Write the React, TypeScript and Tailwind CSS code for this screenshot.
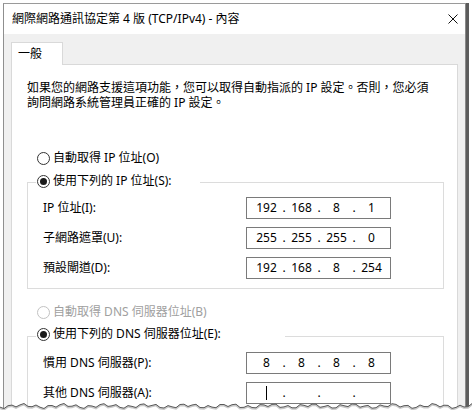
import React from 'react';

const FONT = "font-['Noto_Sans','Noto_Sans_CJK_TC',sans-serif]";

const Radio = ({ checked, disabled, label }: { checked?: boolean; disabled?: boolean; label: string }) => (
    <div className="flex h-[16px] items-center gap-[3px]">
        <span
            className={`flex h-[13px] w-[13px] items-center justify-center rounded-full border bg-white ${
                disabled ? 'border-[#c2c2c2]' : 'border-[#333333]'
            }`}
        >
            {checked && <span className="h-[7px] w-[7px] rounded-full bg-[#1a1a1a]" />}
        </span>
        <span className={`whitespace-nowrap text-[12px] leading-[16px] ${disabled ? 'text-[#a0a0a0]' : 'text-black'}`}>
            {label}
        </span>
    </div>
);

const IpField = ({ parts, caret }: { parts: string[]; caret?: boolean }) => (
    <div className="flex h-[22px] w-[145px] items-center border border-[#7a7a7a] bg-white pl-[5px] text-[12px] leading-[16px] text-black">
        {parts.map((p, i) => (
            <React.Fragment key={i}>
                {i > 0 && <span className="w-[6px] text-center">.</span>}
                <span className="relative flex h-[16px] w-[29px] items-center justify-center">
                    {caret && i === 0 ? <span className="h-[14px] w-[1px] bg-black" /> : p}
                </span>
            </React.Fragment>
        ))}
    </div>
);

const Row = ({ label, parts, caret }: { label: string; parts: string[]; caret?: boolean }) => (
    <div className="flex h-[22px] items-center">
        <span className="w-[203px] whitespace-nowrap text-[12px] leading-[16px] text-black">{label}</span>
        <IpField parts={parts} caret={caret} />
    </div>
);

const GroupBox = ({
    caption,
    captionWidth,
    captionTop,
    children,
}: {
    caption: React.ReactNode;
    captionWidth: string;
    captionTop: string;
    children: React.ReactNode;
}) => (
    <div className="relative w-[417px] border border-[#dcdcdc] pl-[15px]">
        <div className={`absolute left-[8px] bg-white pl-[1px] ${captionWidth} ${captionTop}`}>{caption}</div>
        {children}
    </div>
);

const jag = Array.from({ length: 120 }, (_, i) => {
    const x = i * 4;
    const y = 8 + 1.6 * Math.sin(i * 1.9) + 1.1 * Math.sin(i * 0.61 + 1.3);
    return `${x},${y.toFixed(1)}`;
}).join(' ');

export default function App() {
    return (
        <div className={`relative h-[410px] w-[472px] overflow-hidden bg-white ${FONT}`}>
            <div className="ml-[3px] mt-[3px] h-[440px] w-[463px] border-l border-r border-t border-l-[#8f8f8f] border-r-[#8a8a8a] border-t-[#9a9a9a] bg-[#f0f0f0] shadow-[3px_0_0_#5c5c5c]">
                {/* title bar */}
                <div className="flex h-[30px] items-center justify-between bg-white pl-[8px] pr-[7px]">
                    <span className="whitespace-nowrap text-[12px] leading-[16px] text-black">
                        網際網路通訊協定第 4 版 (TCP/IPv4) - 內容
                    </span>
                    <svg width="10" height="10" viewBox="0 0 10 10">
                        <path d="M0.5 0.5 L9.5 9.5 M9.5 0.5 L0.5 9.5" stroke="#111" strokeWidth="1" fill="none" />
                    </svg>
                </div>

                {/* body */}
                <div className="px-[7px] pt-[8px]">
                    <div className="relative z-10 -mb-px flex h-[23px] w-[52px] items-center border-l border-r border-t border-[#d9d9d9] bg-white pl-[6px]">
                        <span className="text-[12px] leading-[16px] text-black">一般</span>
                    </div>
                    <div className="h-[400px] border border-[#d9d9d9] bg-white pl-[15px] pt-[15px]">
                        <p className="text-[12px] leading-[15px] text-black">
                            如果您的網路支援這項功能，您可以取得自動指派的 IP 設定。否則，您必須
                            <br />
                            詢問網路系統管理員正確的 IP 設定。
                        </p>

                        <div className="ml-[10px] mt-[40px]">
                            <Radio label="自動取得 IP 位址(O)" />
                        </div>

                        <div className="mt-[16px]">
                            <GroupBox
                                caption={<Radio checked label="使用下列的 IP 位址(S):" />}
                                captionWidth="w-[164px]"
                                captionTop="top-[-10px]"
                            >
                                <div className="flex flex-col gap-[8px] pb-[9px] pt-[14px]">
                                    <Row label="IP 位址(I):" parts={['192', '168', '8', '1']} />
                                    <Row label="子網路遮罩(U):" parts={['255', '255', '255', '0']} />
                                    <Row label="預設閘道(D):" parts={['192', '168', '8', '254']} />
                                </div>
                            </GroupBox>
                        </div>

                        <div className="ml-[10px] mt-[15px]">
                            <Radio disabled label="自動取得 DNS 伺服器位址(B)" />
                        </div>

                        <div className="mt-[16px]">
                            <GroupBox
                                caption={<Radio checked label="使用下列的 DNS 伺服器位址(E):" />}
                                captionWidth="w-[249px]"
                                captionTop="top-[-11px]"
                            >
                                <div className="flex flex-col gap-[8px] pb-[9px] pt-[15px]">
                                    <Row label="慣用 DNS 伺服器(P):" parts={['8', '8', '8', '8']} />
                                    <Row label="其他 DNS 伺服器(A):" parts={['', '', '', '']} caret />
                                </div>
                            </GroupBox>
                        </div>
                    </div>
                </div>
            </div>

            {/* torn bottom edge */}
            <svg className="absolute bottom-0 left-0" width="472" height="12" viewBox="0 0 472 12">
                <polygon points={`0,12 ${jag} 476,12`} fill="#ffffff" />
                <polyline points={jag} fill="none" stroke="#c8c8c8" strokeWidth="2" transform="translate(0,1)" />
                <polyline points={jag} fill="none" stroke="#5a5a5a" strokeWidth="1" />
            </svg>
        </div>
    );
}
